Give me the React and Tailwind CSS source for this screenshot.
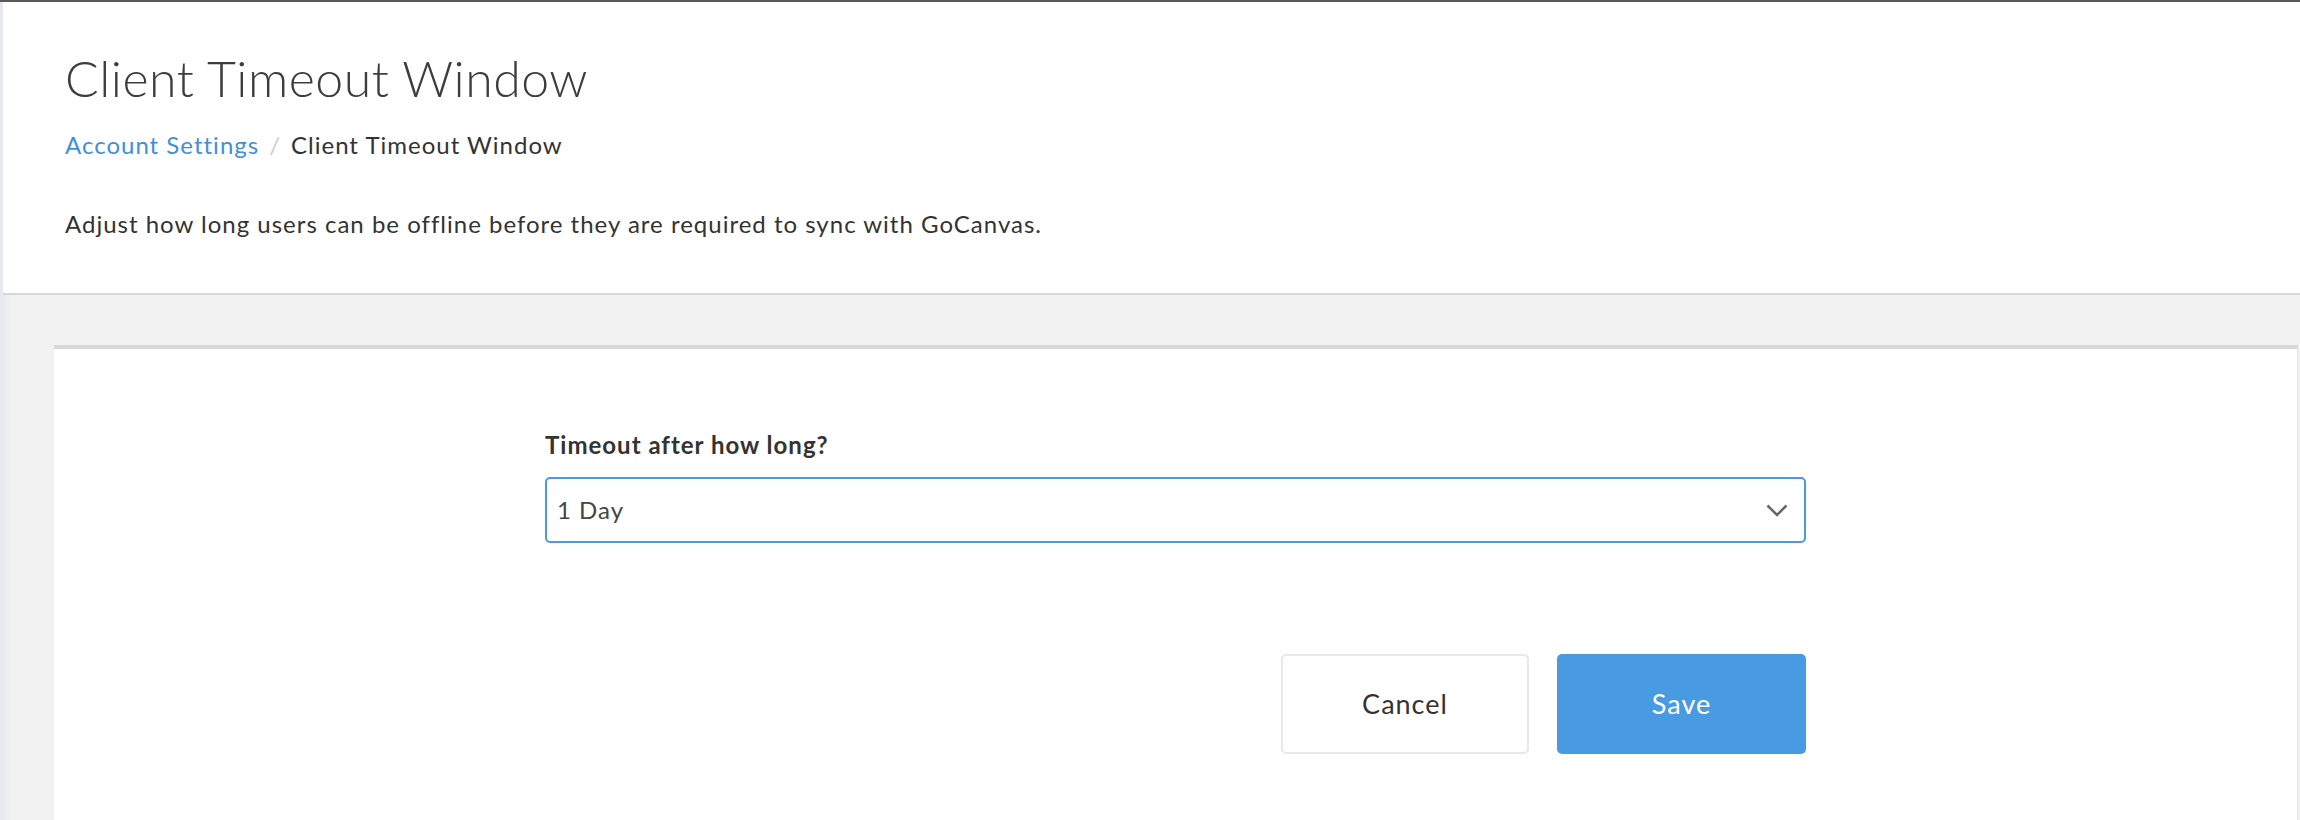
export default function App() {
  return (
    <div className="h-screen flex flex-col border-t-2 border-[#5a5a5a] font-[Lato,sans-serif] text-[#333]">
      <div className="flex flex-1">
        <div className="w-[3px] bg-[#e6eaee]" />
        <main className="flex-1 flex flex-col">
          <header className="bg-white pt-[46px] pb-[54px] pl-[62px] border-b-2 border-[#d4d7db]">
            <h1 className="text-[50px] leading-[60px] font-light tracking-[0.5px] text-[#3d3d3d]">Client Timeout Window</h1>
            <nav className="mt-[22px] flex items-center text-[24px] leading-[30px] tracking-[1px]">
              <a href="#" className="text-[#3f8fd9]">Account Settings</a>
              <span className="mx-[10px] text-[#cccccc]">/</span>
              <span className="text-[#333]">Client Timeout Window</span>
            </nav>
            <p className="mt-[49px] text-[24px] leading-[30px] tracking-[1px] text-[#333]">
              Adjust how long users can be offline before they are required to sync with GoCanvas.
            </p>
          </header>

          <section className="flex-1 flex flex-col bg-[#f2f2f2] pt-[50px] pl-[51px] pr-[2px] shadow-[inset_10px_0_8px_-8px_rgba(0,0,0,0.05)]">
            <div className="flex-1 bg-white border-t-4 border-[#d6d8db] border-r border-r-[#e6e6e6] pt-[81px]">
              <div className="w-[1261px] mx-auto">
                <label className="block text-[24px] leading-[30px] font-bold tracking-[1px] text-[#333]">Timeout after how long?</label>
                <div className="mt-[17px] h-[66px] border-2 border-[#4a9ae0] rounded-[5px] flex items-center justify-between pl-[10px] pr-[16px]">
                  <span className="text-[24px] tracking-[1px] text-[#444]">1 Day</span>
                  <svg width="22" height="13" viewBox="0 0 22 13" fill="none">
                    <polyline points="1.5,1.5 11,11 20.5,1.5" stroke="#666" strokeWidth="2.5" />
                  </svg>
                </div>
                <div className="mt-[111px] flex justify-end gap-[28px]">
                  <button className="w-[248px] h-[100px] rounded-[5px] border-2 border-[#e8e8e8] bg-white text-[27px] tracking-[1px] text-[#333]">Cancel</button>
                  <button className="w-[249px] h-[100px] rounded-[5px] bg-[#499be1] text-[27px] tracking-[1px] text-white">Save</button>
                </div>
              </div>
            </div>
          </section>
        </main>
      </div>
    </div>
  );
}
